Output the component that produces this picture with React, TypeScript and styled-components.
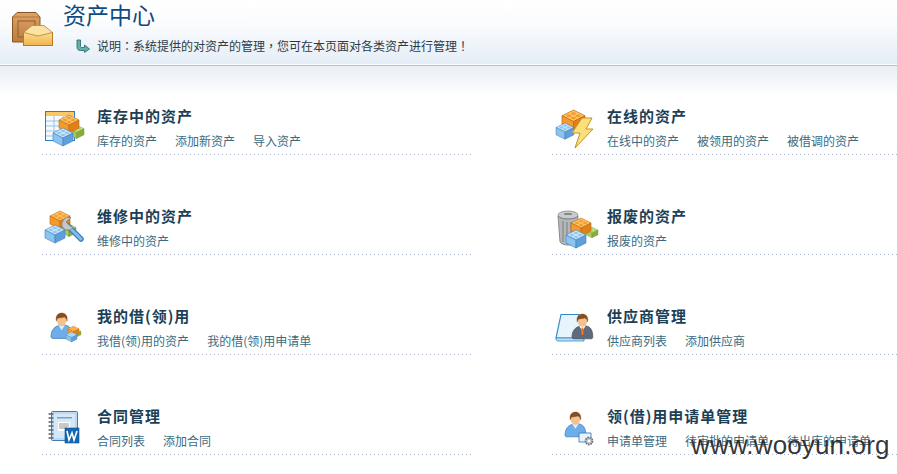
import React from "react";
import styled, { createGlobalStyle } from "styled-components";

const Global = createGlobalStyle`
  html, body { margin: 0; padding: 0; background: #fff; overflow: hidden; }
  body { font-family: "Liberation Sans", "Noto Sans CJK SC", sans-serif; }
`;

const Page = styled.div`
  position: relative;
  width: 897px;
  height: 474px;
  overflow: hidden;
  background: #fff;
`;

const Header = styled.header`
  display: flex;
  height: 64px;
  box-sizing: content-box;
  padding-left: 10px;
  background: linear-gradient(to bottom, #ffffff 0%, #fbfcfe 35%, #e5edf6 100%);
  border-bottom: 1px solid #fafcfe;
`;

const HeaderRule = styled.div`
  height: 1px;
  background: #b3c2cf;
`;

const HeaderIconBox = styled.div`
  width: 53px;
  padding-top: 10px;
  flex: none;
`;

const HeaderText = styled.div`
  display: flex;
  flex-direction: column;
`;

const PageTitle = styled.h1`
  margin: 0;
  font: 400 23px/28px "Noto Sans CJK SC", sans-serif;
  color: #0f4b82;
`;

const Note = styled.div`
  display: flex;
  align-items: center;
  gap: 7px;
  margin: 9px 0 0 13px;
  font: 400 12px/18px "Noto Sans CJK TC", "Noto Sans CJK SC", sans-serif;
  text-spacing-trim: space-all;
  color: #2b3b48;
  white-space: nowrap;
`;

const Main = styled.main`
  display: grid;
  grid-template-columns: 430px 345px;
  column-gap: 80px;
  row-gap: 50px;
  padding: 39px 0 0 42px;
  background: linear-gradient(to bottom, #e9eff5 0px, #ffffff 30px) no-repeat;
`;

const Card = styled.section`
  display: flex;
  height: 50px;
  box-sizing: border-box;
  padding-bottom: 1px;
  background: repeating-linear-gradient(to right, #a9b5d2 0 1px, transparent 1px 4px) left bottom / 100% 1px no-repeat;
`;

const IconBox = styled.div`
  flex: none;
  width: 55px;
  padding-top: 3px;
`;

const CardBody = styled.div`
  display: flex;
  flex-direction: column;
`;

const CardTitle = styled.h2`
  margin: 0 0 2px;
  font: 700 15px/22px "Noto Sans CJK SC", sans-serif;
  letter-spacing: 1px;
  color: #1d3f56;
  white-space: nowrap;
`;

const Links = styled.div`
  display: flex;
  gap: 18px;
`;

const Link = styled.a`
  font: 400 12px/24px "Noto Sans CJK SC", sans-serif;
  color: #3c6a80;
  white-space: nowrap;
  cursor: pointer;
`;

const Watermark = styled.div`
  position: absolute;
  left: 691px;
  top: 430px;
  font: 400 26px/30px "Liberation Sans", sans-serif;
  letter-spacing: 0.15px;
  color: rgba(35, 35, 35, 0.92);
  white-space: nowrap;
`;

type P = { x: number; y: number; s?: number };

const palette = {
  orange: ["#ffc163", "#f59a2c", "#e0801a", "#b96a10"],
  blue: ["#c6e4fb", "#8cc4f0", "#5f9fdb", "#3f7fb8"],
  green: ["#cfe59a", "#a6cc57", "#86ad3b", "#6b8f2a"],
};

const Brick = ({ x, y, s = 1, c }: P & { c: keyof typeof palette }) => {
  const [t, l, r, e] = palette[c];
  return (
    <g transform={`translate(${x} ${y}) scale(${s})`} stroke={e} strokeWidth={0.6} strokeLinejoin="round">
      <path d="M0 5 10 0 20 5 10 10Z" fill={t} />
      <path d="M0 5 10 10V18L0 13Z" fill={l} />
      <path d="M20 5 10 10V18L20 13Z" fill={r} />
      <ellipse cx="6" cy="5" rx="2.2" ry="1.1" fill={l} stroke="none" />
      <ellipse cx="14" cy="5" rx="2.2" ry="1.1" fill={l} stroke="none" />
      <ellipse cx="10" cy="3" rx="2.2" ry="1.1" fill={l} stroke="none" />
      <ellipse cx="10" cy="7" rx="2.2" ry="1.1" fill={l} stroke="none" />
    </g>
  );
};

const Svg = ({ children }: { children: React.ReactNode }) => (
  <svg width="55" height="44" viewBox="0 0 55 44" style={{ display: "block", overflow: "visible" }}>
    {children}
  </svg>
);

const Person = ({ x, y, s = 1, suit = false }: P & { suit?: boolean }) => (
  <g transform={`translate(${x} ${y}) scale(${s})`}>
    <path d="M0 29C0 20 5 16 11 15L18 15C23 16 26 20 26 29 26 30 25 31 24 31H2C1 31 0 30 0 29Z" fill={suit ? "#5f6b7c" : "#6eaee8"} stroke={suit ? "#3e4856" : "#2f6fb8"} strokeWidth="0.8" />
    <path d="M9 15 13 21 17 15Z" fill={suit ? "#fff" : "#dcecfb"} />
    {suit && <path d="M12 17H14L14.5 24 13 27 11.5 24Z" fill="#f0781e" />}
    <ellipse cx="13" cy="8.5" rx="6" ry="7.5" fill="#f3c08e" />
    <path d="M6.5 10C5 3 9 0 13 0S21 3 19.5 10C19 7 18 5.5 16 5 13 6 9 6 8 6.5 7 7.5 7 9 6.5 10Z" fill="#8a4d1c" stroke="#6d3a12" strokeWidth="0.4" />
  </g>
);

const IconStock = () => (
  <Svg>
    <rect x="3.5" y="3.5" width="29" height="29" fill="#f4f9fe" stroke="#2f7fbe" />
    <rect x="4" y="4" width="28" height="4" fill="#f9c765" />
    <path d="M4 13H32M4 18H32M4 23H32M4 28H32M12 8V32M21 8V32" stroke="#9cc3e4" strokeWidth="1" fill="none" />
    <Brick c="green" x={27} y={17} s={0.75} />
    <Brick c="orange" x={17} y={7} s={1} />
    <Brick c="blue" x={11} y={20} s={1} />
  </Svg>
);

const IconRepair = () => (
  <Svg>
    <Brick c="green" x={20} y={16} s={0.7} />
    <Brick c="orange" x={8} y={3} s={1} />
    <Brick c="blue" x={3} y={17} s={1} />
    <path d="M26 18 39 31" stroke="#3f7fb8" strokeWidth="5.5" strokeLinecap="round" />
    <path d="M26 18 39 31" stroke="#7fbdf0" strokeWidth="3" strokeLinecap="round" />
    <path d="M29 9.5A7 7 0 0 0 21 20 7 7 0 0 0 31 20L27 17 24 14Z" fill="#c3c7cb" stroke="#7d8286" strokeWidth="0.8" />
  </Svg>
);

const IconBorrow = () => (
  <Svg>
    <Person x={9} y={5} s={0.82} />
    <Brick c="green" x={30} y={21} s={0.45} />
    <Brick c="orange" x={26} y={18} s={0.55} />
    <Brick c="blue" x={24} y={24} s={0.55} />
  </Svg>
);

const IconContract = () => (
  <Svg>
    <rect x="9.5" y="3.5" width="26" height="29" rx="1" fill="#bcd9f2" stroke="#3f7fb8" />
    <rect x="12" y="6" width="21" height="24" fill="#d6e8f8" />
    <rect x="15" y="9" width="15" height="1.5" fill="#6fa3d0" />
    <rect x="16" y="14" width="12" height="9" fill="#fff" />
    <path d="M17 16H27M17 18H27M17 20H25" stroke="#777" strokeWidth="0.8" />
    <path d="M7 6H11M7 10H11M7 14H11M7 18H11M7 22H11M7 26H11M7 30H11" stroke="#5b6570" strokeWidth="1.4" strokeLinecap="round" />
    <rect x="23" y="20" width="14" height="15" fill="#1467b3" stroke="#0e508d" strokeWidth="0.6" />
    <path d="M25 23 27 32 30 25 32 32 35 23" fill="none" stroke="#fff" strokeWidth="1.6" />
  </Svg>
);

const IconOnline = () => (
  <Svg>
    <Brick c="orange" x={10} y={2} s={1.15} />
    <Brick c="blue" x={4} y={15} s={0.9} />
    <path d="M30 10H40L34 21H41L23 40 28 25H20Z" fill="#fbe07a" stroke="#c98f24" strokeWidth="1" strokeLinejoin="round" />
  </Svg>
);

const IconScrap = () => (
  <Svg>
    <ellipse cx="16" cy="7" rx="10" ry="4" fill="#c9cbce" stroke="#888" strokeWidth="0.8" />
    <path d="M6 8 8 34C10 38 22 38 24 34L26 8C24 12 8 12 6 8Z" fill="#b4b7ba" stroke="#777" strokeWidth="0.8" />
    <path d="M11 13V34M15 14V36M19 14V36" stroke="#85888b" strokeWidth="1.2" />
    <rect x="12" y="5" width="8" height="2" rx="1" fill="#85888b" />
    <Brick c="green" x={34} y={19} s={0.6} />
    <Brick c="orange" x={19} y={10} s={1} />
    <Brick c="blue" x={14} y={22} s={1} />
  </Svg>
);

const IconSupplier = () => (
  <Svg>
    <path d="M9 6.5H27L30 30H4Z" fill="#e8f3fb" stroke="#2f8ac6" strokeWidth="1.2" strokeLinejoin="round" />
    <path d="M4 30H32V33H6C4 33 4 31 4 30Z" fill="#bfe0f5" stroke="#2f8ac6" strokeWidth="0.8" />
    <Person x={20} y={6} s={0.8} suit />
  </Svg>
);

const IconRequest = () => (
  <Svg>
    <Person x={13} y={4} s={0.8} />
    <path d="M27 25H39V34H27Z" fill="#e6f2fc" stroke="#2f6fb8" strokeWidth="0.8" />
    <circle cx="37" cy="33" r="3.5" fill="#c4c8cc" stroke="#6e7377" strokeWidth="1.8" strokeDasharray="1.6 0.8" />
    <circle cx="37" cy="33" r="1.3" fill="#fff" />
  </Svg>
);

const HeaderIcon = () => (
  <svg width="46" height="38" viewBox="0 0 46 38" style={{ display: "block" }}>
    <defs>
      <linearGradient id="hdrBox" x1="0" y1="0" x2="0" y2="1">
        <stop offset="0" stopColor="#dca468" />
        <stop offset="1" stopColor="#bd7c3c" />
      </linearGradient>
      <linearGradient id="hdrEnv" x1="0" y1="0" x2="0" y2="1">
        <stop offset="0" stopColor="#fbdc8f" />
        <stop offset="1" stopColor="#f2b34e" />
      </linearGradient>
    </defs>
    <path d="M2.5 7 7 2.5H26L30 7V32H2.5Z" fill="url(#hdrBox)" stroke="#8d5420" strokeWidth="1" />
    <path d="M2.5 7H30" stroke="#a86c30" strokeWidth="0.8" />
    <rect x="8" y="11" width="17" height="16" fill="none" stroke="#8f5a27" strokeWidth="1" />
    <rect x="13.5" y="22.5" width="29" height="13" fill="url(#hdrEnv)" stroke="#b87a26" strokeWidth="1" />
    <path d="M13.5 22.5 22 15.5H34L42.5 22.5 28 26Z" fill="#fbe3a6" stroke="#c08c38" strokeWidth="0.9" strokeLinejoin="round" />
  </svg>
);

const NoteArrow = () => (
  <svg width="14" height="14" viewBox="0 0 14 14" style={{ display: "block", flex: "none" }}>
    <path d="M1 1H4.5V7C4.5 8 5 8.5 6 8.5H8.5V6L13.5 10 8.5 13.5V11.5H4.5C2 11.5 1 10 1 8Z" fill="#64b0a4" stroke="#2f6f78" strokeWidth="0.9" strokeLinejoin="round" />
  </svg>
);

const cards = [
  { icon: <IconStock />, title: "库存中的资产", links: ["库存的资产", "添加新资产", "导入资产"] },
  { icon: <IconOnline />, title: "在线的资产", links: ["在线中的资产", "被领用的资产", "被借调的资产"] },
  { icon: <IconRepair />, title: "维修中的资产", links: ["维修中的资产"] },
  { icon: <IconScrap />, title: "报废的资产", links: ["报废的资产"] },
  { icon: <IconBorrow />, title: "我的借(领)用", links: ["我借(领)用的资产", "我的借(领)用申请单"] },
  { icon: <IconSupplier />, title: "供应商管理", links: ["供应商列表", "添加供应商"] },
  { icon: <IconContract />, title: "合同管理", links: ["合同列表", "添加合同"] },
  { icon: <IconRequest />, title: "领(借)用申请单管理", links: ["申请单管理", "待审批的申请单", "待出库的申请单"] },
];

export default function App() {
  return (
    <Page>
      <Global />
      <Header>
        <HeaderIconBox>
          <HeaderIcon />
        </HeaderIconBox>
        <HeaderText>
          <PageTitle>资产中心</PageTitle>
          <Note>
            <NoteArrow />
            说明：系统提供的对资产的管理，您可在本页面对各类资产进行管理！
          </Note>
        </HeaderText>
      </Header>
      <HeaderRule />
      <Main>
        {cards.map((c) => (
          <Card key={c.title}>
            <IconBox>{c.icon}</IconBox>
            <CardBody>
              <CardTitle>{c.title}</CardTitle>
              <Links>
                {c.links.map((l) => (
                  <Link key={l}>{l}</Link>
                ))}
              </Links>
            </CardBody>
          </Card>
        ))}
      </Main>
      <Watermark>www.wooyun.org</Watermark>
    </Page>
  );
}
